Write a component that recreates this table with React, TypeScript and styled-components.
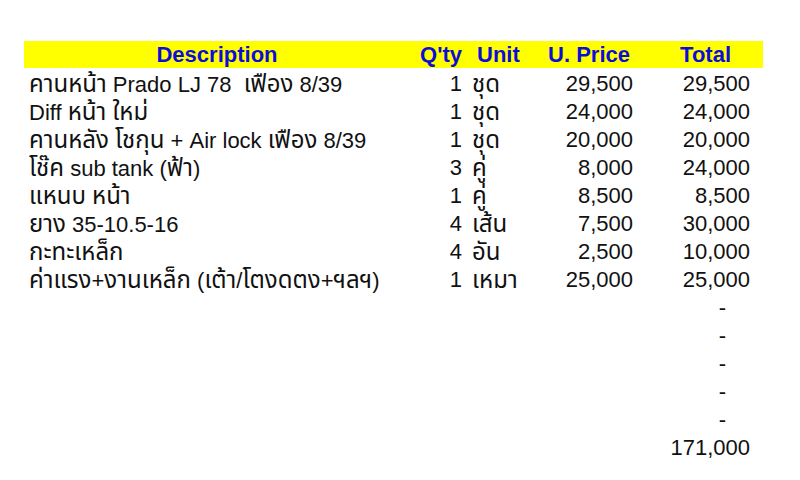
import React from "react";
import styled, { createGlobalStyle } from "styled-components";

const Global = createGlobalStyle`
  html, body { margin: 0; padding: 0; background: #fff; }
  body {
    font-family: "Liberation Sans", Arial, "Noto Sans Thai", "Noto Sans Thai Looped", Garuda, Loma, "Tlwg Typo", sans-serif;
    color: #111;
  }
`;

const Page = styled.div`
  width: 800px;
  height: 480px;
  padding-top: 41px;
  padding-left: 24px;
  box-sizing: border-box;
`;

const Sheet = styled.div`
  width: 739px;
  display: grid;
  grid-template-columns: 386px 56px 76px 95px 126px;
`;

const HeadCell = styled.div<{ $align: "left" | "center" | "right"; $pad?: string }>`
  background: #ffff00;
  height: 27px;
  line-height: 27px;
  font-size: 22px;
  font-weight: bold;
  color: #0d0ddb;
  text-align: ${(p) => p.$align};
  padding: ${(p) => p.$pad || "0"};
  margin-bottom: 2px;
  white-space: nowrap;
`;

const Cell = styled.div<{ $align: "left" | "right"; $pad?: string }>`
  height: 28px;
  line-height: 28px;
  font-size: 22px;
  text-align: ${(p) => p.$align};
  padding: ${(p) => p.$pad || "0"};
  white-space: pre;
  overflow: visible;
`;

const Thai = styled.span`
  font-size: 24px;
  line-height: 28px;
`;

const renderText = (s: string) =>
  s.split(/([\u0E00-\u0E7F]+)/).map((part, i) =>
    /[\u0E00-\u0E7F]/.test(part) ? <Thai key={i}>{part}</Thai> : <React.Fragment key={i}>{part}</React.Fragment>
  );

type Item = { d: string; q: number; u: string; p: string; t: string };

const items: Item[] = [
  { d: "คานหน้า Prado LJ 78  เฟือง 8/39", q: 1, u: "ชุด", p: "29,500", t: "29,500" },
  { d: "Diff หน้า ใหม่", q: 1, u: "ชุด", p: "24,000", t: "24,000" },
  { d: "คานหลัง โชกุน + Air lock เฟือง 8/39", q: 1, u: "ชุด", p: "20,000", t: "20,000" },
  { d: "โช๊ค sub tank (ฟ้า)", q: 3, u: "คู่", p: "8,000", t: "24,000" },
  { d: "แหนบ หน้า", q: 1, u: "คู่", p: "8,500", t: "8,500" },
  { d: "ยาง 35-10.5-16", q: 4, u: "เส้น", p: "7,500", t: "30,000" },
  { d: "กะทะเหล็ก", q: 4, u: "อัน", p: "2,500", t: "10,000" },
  { d: "ค่าแรง+งานเหล็ก (เต้า/โตงดตง+ฯลฯ)", q: 1, u: "เหมา", p: "25,000", t: "25,000" },
];

const Row: React.FC<{ d?: string; q?: string; u?: string; p?: string; t?: string; tPad?: string }> = ({
  d = "",
  q = "",
  u = "",
  p = "",
  t = "",
  tPad = "0 13px 0 0",
}) => (
  <>
    <Cell $align="left" $pad="0 0 0 5px">{renderText(d)}</Cell>
    <Cell $align="right" $pad="0 4px 0 0">{q}</Cell>
    <Cell $align="left" $pad="0 0 0 6px">{renderText(u)}</Cell>
    <Cell $align="right" $pad="0 4px 0 0">{p}</Cell>
    <Cell $align="right" $pad={tPad}>{t}</Cell>
  </>
);

export default function App() {
  return (
    <>
      <Global />
      <Page>
        <Sheet>
          <HeadCell $align="center">Description</HeadCell>
          <HeadCell $align="right" $pad="0 4px 0 0">Q'ty</HeadCell>
          <HeadCell $align="left" $pad="0 0 0 11px">Unit</HeadCell>
          <HeadCell $align="right" $pad="0 7px 0 0">U. Price</HeadCell>
          <HeadCell $align="right" $pad="0 32px 0 0">Total</HeadCell>
          {items.map((it, i) => (
            <Row key={i} d={it.d} q={String(it.q)} u={it.u} p={it.p} t={it.t} />
          ))}
          {[0, 1, 2, 3, 4].map((i) => (
            <Row key={"e" + i} t="-" tPad="0 37px 0 0" />
          ))}
          <Row t="171,000" />
        </Sheet>
      </Page>
    </>
  );
}
